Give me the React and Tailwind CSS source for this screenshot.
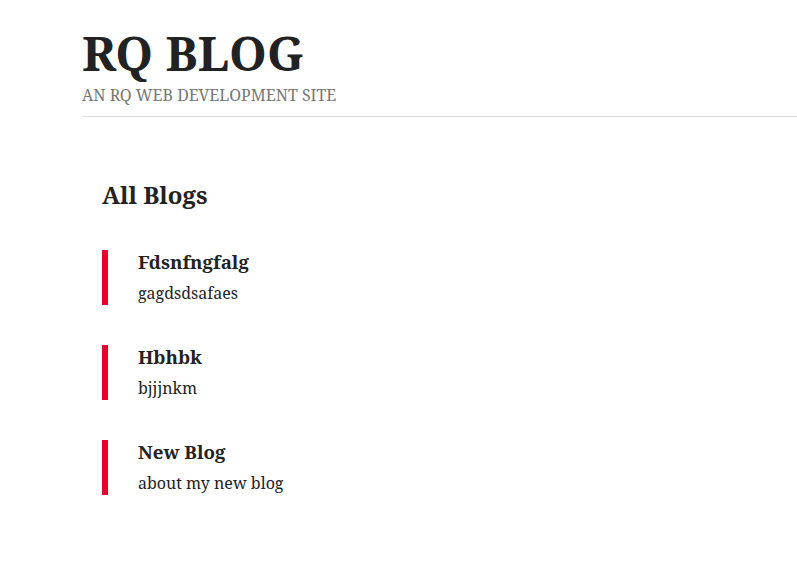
export default function App() {
  const blogs = [
    { title: "Fdsnfngfalg", body: "gagdsdsafaes" },
    { title: "Hbhbk", body: "bjjjnkm" },
    { title: "New Blog", body: "about my new blog" },
  ];

  return (
    <div className="min-h-screen bg-white text-[#222] font-['Noto_Serif','DejaVu_Serif',serif]">
      <header className="ml-[82px] pt-[24px] pb-[11px] border-b border-[#e0e0e0]">
        <h1 className="text-[48px] font-bold leading-[58px] text-[#222]">RQ BLOG</h1>
        <p className="text-[16px] leading-[20px] text-[#777] uppercase mt-[3px]">An RQ web development site</p>
      </header>
      <main className="ml-[102px] pt-[62px]">
        <h2 className="text-[24px] font-bold leading-[32px]">All Blogs</h2>
        <div className="mt-[39px] flex flex-col gap-[40px]">
          {blogs.map((b) => (
            <div key={b.title} className="border-l-[6px] border-[#e8002d] pl-[30px]">
              <h3 className="text-[18.72px] font-bold leading-[24px]">{b.title}</h3>
              <p className="text-[16px] leading-[23px] mt-[8px]">{b.body}</p>
            </div>
          ))}
        </div>
      </main>
    </div>
  );
}
